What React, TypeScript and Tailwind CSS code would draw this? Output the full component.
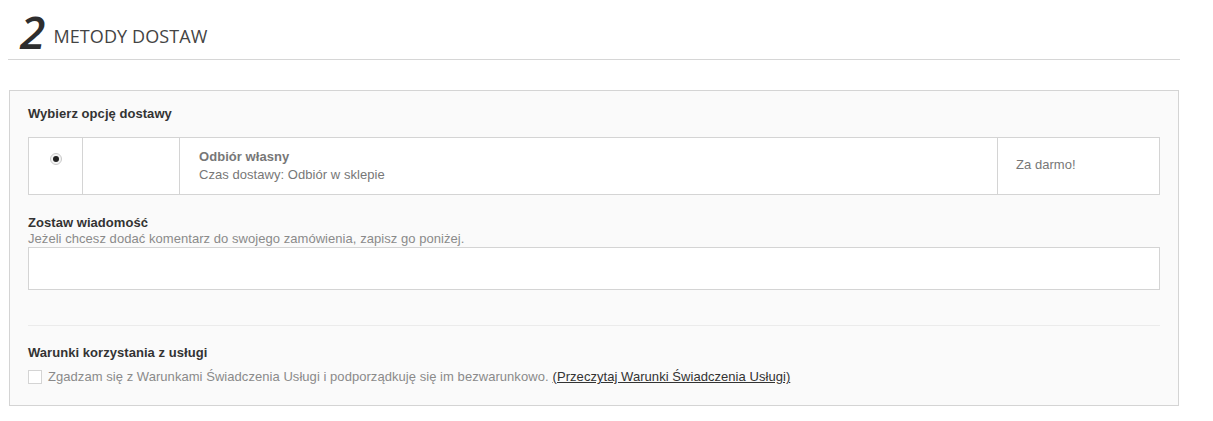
import React from "react";

export default function App() {
  return (
    <div className="w-[1213px] h-[421px] bg-white tracking-[0.05px]" style={{ fontFamily: '"Liberation Sans", Arial, sans-serif' }}>
      <div className="pl-[8px] pr-[33px] pt-[14px]">
        <div className="flex items-end h-[46px] border-b border-[#d6d6d6] pb-[8px] pl-[12px]">
          <span className="text-[46px] leading-[40px] italic text-[#2e2e2e] font-semibold" style={{ fontFamily: '"Open Sans", sans-serif' }}>2</span>
          <span className="ml-[8px] mb-[5px] text-[18px] leading-[20px] text-[#444] font-medium tracking-[0.1px]" style={{ fontFamily: '"Open Sans", sans-serif' }}>METODY DOSTAW</span>
        </div>
      </div>
      <div className="mt-[30px] ml-[9px] w-[1170px] h-[316px] border border-[#d4d4d4] bg-[#fafafa] px-[18px] pt-[14px]">
        <div className="text-[13px] font-bold text-[#333] leading-[17px]">Wybierz opcję dostawy</div>
        <div className="mt-[15px] flex h-[58px] w-[1132px] border border-[#d4d4d4] bg-white">
          <div className="w-[54px] border-r border-[#d4d4d4] flex justify-center pt-[15px]">
            <span className="w-[12px] h-[12px] rounded-full border border-[#c9c9c9] bg-[#f4f4f4] flex items-center justify-center">
              <span className="w-[6px] h-[6px] rounded-full bg-[#222]" />
            </span>
          </div>
          <div className="w-[97px] border-r border-[#d4d4d4]" />
          <div className="flex-1 border-r border-[#d4d4d4] pl-[19px] pt-[10px] text-[13px] leading-[18px] text-[#777]">
            <div className="font-bold">Odbiór własny</div>
            <div>Czas dostawy: Odbiór w sklepie</div>
          </div>
          <div className="w-[161px] pl-[18px] pt-[18px] text-[13px] leading-[18px] text-[#777]">Za darmo!</div>
        </div>
        <div className="mt-[20px] text-[13px] font-bold text-[#333] leading-[16px]">Zostaw wiadomość</div>
        <div className="text-[13px] text-[#8a8a8a] leading-[16px]">Jeżeli chcesz dodać komentarz do swojego zamówienia, zapisz go poniżej.</div>
        <div className="h-[43px] w-[1132px] border border-[#d4d4d4] bg-white" />
        <div className="mt-[35px] w-[1132px] border-t border-[#ebebeb]" />
        <div className="mt-[19px] text-[13px] font-bold text-[#333] leading-[16px]">Warunki korzystania z usługi</div>
        <div className="mt-[8px] flex items-center text-[13px] text-[#8a8a8a] leading-[16px]">
          <span className="w-[14px] h-[14px] border border-[#d4d4d4] bg-white mr-[6px]" />
          <span>Zgadzam się z Warunkami Świadczenia Usługi i podporządkuję się im bezwarunkowo. </span>
          <span className="ml-[4px] underline text-[#333]">(Przeczytaj Warunki Świadczenia Usługi)</span>
        </div>
      </div>
    </div>
  );
}
